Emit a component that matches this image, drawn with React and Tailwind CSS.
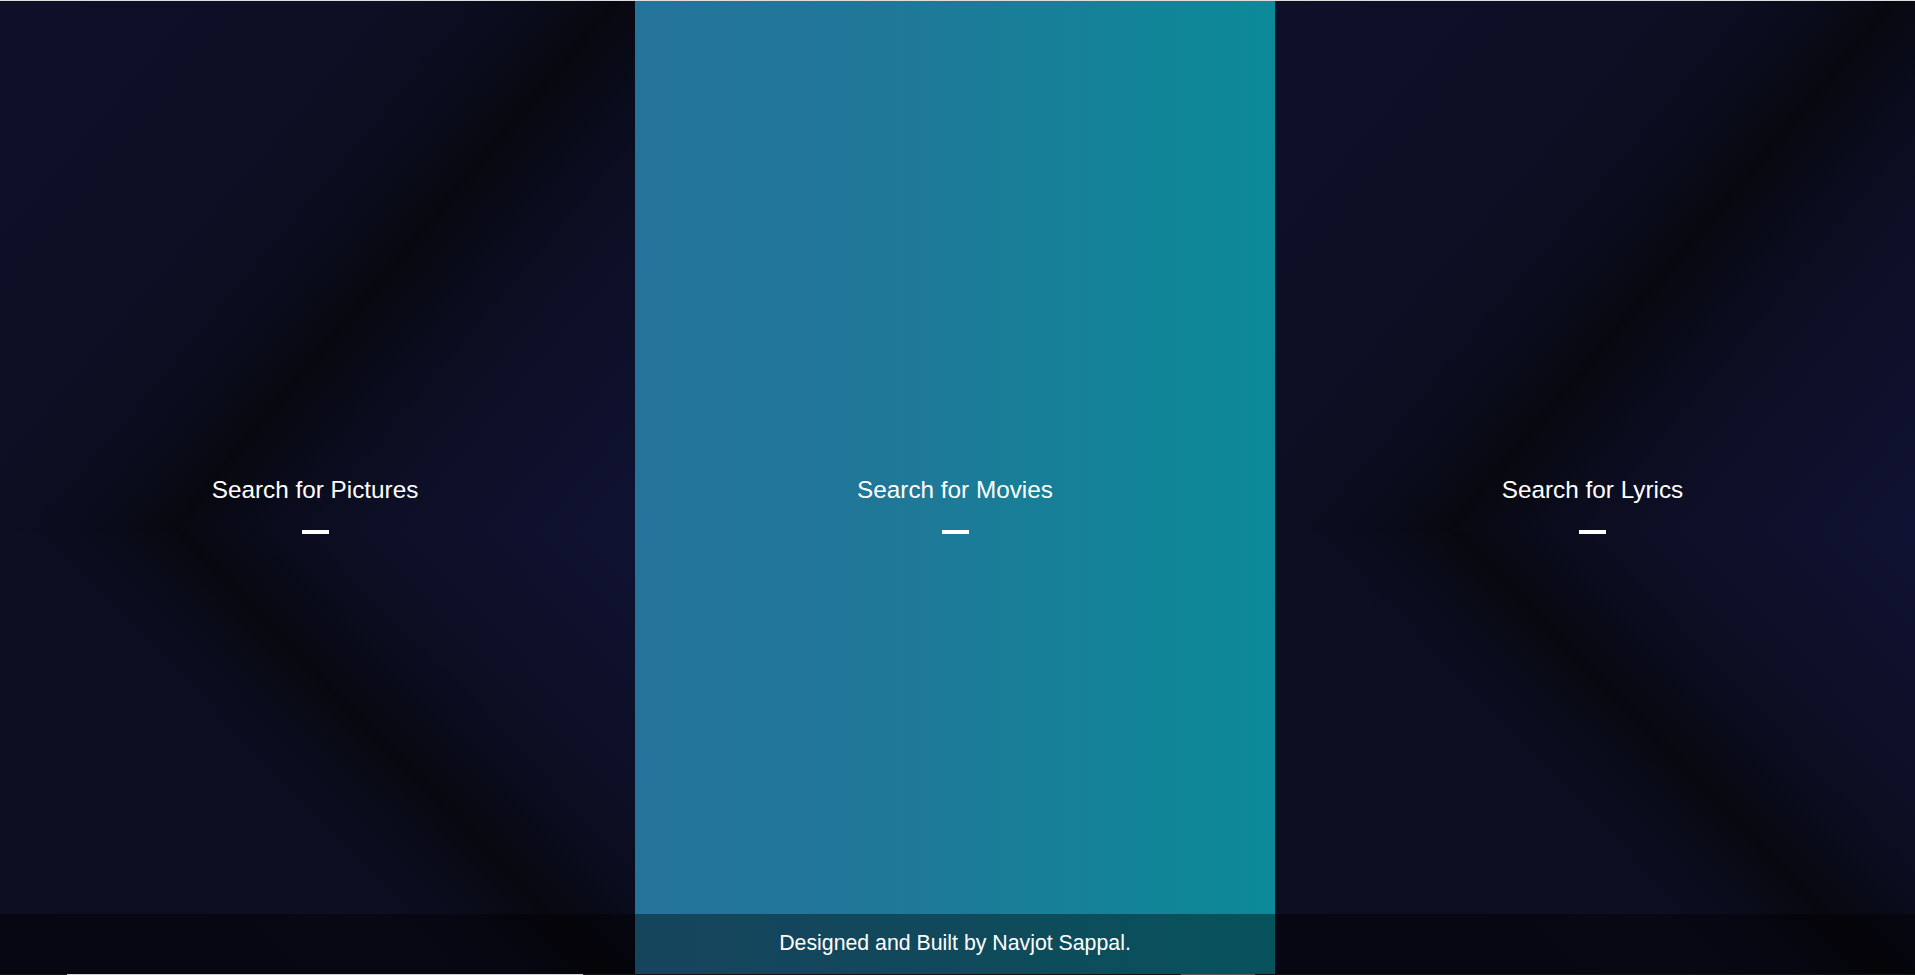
import React from "react";

function DarkPanel({ title }) {
  return (
    <div className="relative h-full overflow-hidden">
      <div className="absolute inset-0 flex flex-col">
        <div className="h-[530px] bg-[linear-gradient(130deg,#0e1029_0%,#0d0f25_25%,#0c0e22_40%,#0a0c1c_49%,#07080f_57%,#0a0b1b_65%,#0d0f26_76%,#0f1232_100%)]" />
        <div className="flex-1 bg-[linear-gradient(46deg,#0b0d1f_0%,#0b0d21_25%,#0c0e22_40%,#0a0c1c_49%,#07080f_57%,#0a0b1b_65%,#0d0f26_76%,#0f1232_100%)]" />
      </div>
      <div className="relative flex flex-col items-center pt-[475px]">
        <div className="text-[24.3px] leading-[28px] text-white font-['Liberation_Sans',Arial,sans-serif] -ml-[5px]">
          {title}
        </div>
        <div className="mt-[26px] h-[4px] w-[27px] bg-white -ml-[5px]" />
      </div>
    </div>
  );
}

function MiddlePanel({ title }) {
  return (
    <div className="h-full bg-[linear-gradient(to_right,#24739b,#1f7898_40%,#0b8a98)]">
      <div className="flex flex-col items-center pt-[475px]">
        <div className="text-[24.3px] leading-[28px] text-white font-['Liberation_Sans',Arial,sans-serif]">
          {title}
        </div>
        <div className="mt-[26px] h-[4px] w-[27px] bg-white" />
      </div>
    </div>
  );
}

export default function App() {
  return (
    <div className="w-full h-[975px] overflow-hidden flex flex-col bg-[#0c0e22]">
      <div className="h-px w-full bg-[#dedede]" />
      <div className="relative flex-1">
        <div className="grid h-full grid-cols-[635px_640px_1fr]">
          <DarkPanel title="Search for Pictures" />
          <MiddlePanel title="Search for Movies" />
          <DarkPanel title="Search for Lyrics" />
        </div>
        <div className="absolute bottom-0 left-0 right-0 h-[60px] bg-black/40 flex items-center justify-center">
          <span className="text-[21.3px] text-white font-['Liberation_Sans',Arial,sans-serif] pr-[5px]">
            Designed and Built by Navjot Sappal.
          </span>
        </div>
      </div>
      <div className="h-px w-full flex bg-[#141414]">
        <div className="ml-[67px] w-[516px] bg-[#d0d0d0]" />
        <div className="ml-[598px] w-[74px] bg-[#5a5a5a]" />
      </div>
    </div>
  );
}
